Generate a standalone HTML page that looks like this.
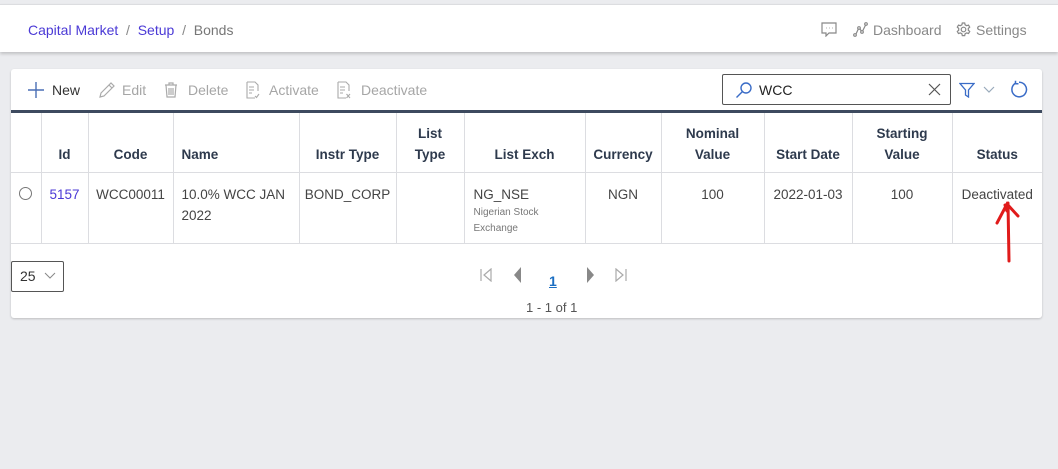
<!DOCTYPE html>
<html><head><meta charset="utf-8"><style>
*{box-sizing:border-box;margin:0;padding:0}
body{width:1058px;height:469px;background:#ebecef;font-family:"Liberation Sans",sans-serif;position:relative;overflow:hidden;color:#333}
.top{position:absolute;left:0;top:4px;width:1058px;height:48px;background:#fff;border-top:1px solid #dcdde0;box-shadow:0 2px 3px rgba(0,0,0,.18)}
.abs{position:absolute;white-space:nowrap}
.card{position:absolute;left:11px;top:69px;width:1031px;height:249px;background:#fff;border-radius:3px;box-shadow:0 1px 2px rgba(0,0,0,.2)}
.tb{font-size:14px;color:#a6a6a6}
table{position:absolute;left:0;top:41px;border-collapse:collapse;table-layout:fixed;border-top:3px solid #3d4a5f}
td,th{border:1px solid #dcdde1;font-size:13.5px}
th{height:61px;font-weight:bold;color:#2e3a4d;vertical-align:bottom;padding-bottom:7px;line-height:21px}
td{height:71px;vertical-align:top;padding-top:11px;line-height:21px;color:#444}
tr>*:first-child{border-left:none}
tr>*:last-child{border-right:none}
</style></head><body>
<div class="top">
<div class="abs" style="left:28px;top:17px;font-size:14px;color:#4b3ad6">Capital Market <span style="color:#888">&nbsp;/&nbsp;</span> Setup <span style="color:#888">&nbsp;/&nbsp;</span> <span style="color:#777">Bonds</span></div>
<svg class="abs" style="left:821px;top:17px" width="16" height="15" viewBox="0 0 16 15" fill="none" stroke="#888" stroke-width="1.2"><path d="M1 1h14v10H8l-3 3v-3H1z"/><path d="M5 6h.5M8 6h.5M11 6h.5"/></svg>
<svg class="abs" style="left:853px;top:17px" width="15" height="15" viewBox="0 0 15 15" fill="none" stroke="#888" stroke-width="1.2"><circle cx="2" cy="13" r="1.3"/><circle cx="6" cy="6" r="1.3"/><circle cx="9" cy="10" r="1.3"/><circle cx="13" cy="2" r="1.3"/><path d="M3 12l2.3-5M7 7l1.3 2M9.6 9l3-6"/></svg>
<div class="abs" style="left:873px;top:17px;font-size:14px;color:#888">Dashboard</div>
<svg class="abs" style="left:956px;top:17px" width="15" height="15" viewBox="0 0 15 15" fill="none" stroke="#888" stroke-width="1.2"><circle cx="7.5" cy="7.5" r="2.3"/><path d="M6.3 1h2.4l.4 1.8 1.6.9 1.8-.6 1.2 2-1.4 1.3v1.8l1.4 1.3-1.2 2-1.8-.6-1.6.9-.4 1.8H6.3l-.4-1.8-1.6-.9-1.8.6-1.2-2 1.4-1.3V6.4L1.3 5.1l1.2-2 1.8.6 1.6-.9z"/></svg>
<div class="abs" style="left:976px;top:17px;font-size:14px;color:#888">Settings</div>
</div>
<div class="card">
<svg class="abs" style="left:16px;top:12px" width="18" height="18" viewBox="0 0 18 18" stroke="#4a6fb5" stroke-width="1.4"><path d="M9 1v16M1 9h16"/></svg>
<div class="abs" style="left:41px;top:13px;font-size:14px;color:#333">New</div>
<svg class="abs" style="left:87px;top:12px" width="18" height="18" viewBox="0 0 18 18" fill="none" stroke="#aaa" stroke-width="1.2"><path d="M2 16l1-4L13 2l3 3L6 15z M11 4l3 3"/></svg>
<div class="abs tb" style="left:111px;top:13px">Edit</div>
<svg class="abs" style="left:152px;top:12px" width="16" height="18" viewBox="0 0 16 18" fill="none" stroke="#aaa" stroke-width="1.2"><path d="M2 4h12M6 4V2h4v2M3 4l1 12h8l1-12M6 7v7M8 7v7M10 7v7"/></svg>
<div class="abs tb" style="left:177px;top:13px">Delete</div>
<svg class="abs" style="left:234px;top:12px" width="16" height="18" viewBox="0 0 16 18" fill="none" stroke="#aaa" stroke-width="1.1"><path d="M2 1h8l3 3v6M2 1v16h8M4 6h5M4 9h5M4 12h3M10 15l1.5 1.5L14 13"/></svg>
<div class="abs tb" style="left:258px;top:13px">Activate</div>
<svg class="abs" style="left:325px;top:12px" width="16" height="18" viewBox="0 0 16 18" fill="none" stroke="#aaa" stroke-width="1.1"><path d="M2 1h8l3 3v6M2 1v16h8M4 6h5M4 9h5M4 12h3M10.5 13l3.5 4M14 13l-3.5 4"/></svg>
<div class="abs tb" style="left:350px;top:13px">Deactivate</div>
<div class="abs" style="left:711px;top:5px;width:229px;height:31px;border:1px solid #555;border-radius:2px"></div>
<svg class="abs" style="left:724px;top:12px" width="18" height="18" viewBox="0 0 18 18" fill="none" stroke="#3a6cc7" stroke-width="1.4"><circle cx="11" cy="7" r="5"/><path d="M7.5 10.5L1.5 16.5"/></svg>
<div class="abs" style="left:748px;top:13px;font-size:14px;color:#222">WCC</div>
<svg class="abs" style="left:917px;top:14px" width="13" height="13" viewBox="0 0 13 13" stroke="#555" stroke-width="1.2"><path d="M1 1l11 11M12 1L1 12"/></svg>
<svg class="abs" style="left:948px;top:13px" width="16" height="16" viewBox="0 0 16 16" fill="none" stroke="#3a6cc7" stroke-width="1.3"><path d="M1 1.5h14l-5.5 6.5v7l-3-2v-5z"/></svg>
<svg class="abs" style="left:972px;top:17px" width="12" height="8" viewBox="0 0 12 8" fill="none" stroke="#9ab" stroke-width="1.2"><path d="M1 1l5 5 5-5"/></svg>
<svg class="abs" style="left:999px;top:11px" width="18" height="19" viewBox="0 0 18 19" fill="none" stroke="#3a6cc7" stroke-width="1.5"><path d="M5.5 3.2A7.3 7.3 0 1 0 9 2.2"/><path d="M5.5 0.8v3h3"/></svg>
<table>
<colgroup><col style="width:30px"><col style="width:47px"><col style="width:85px"><col style="width:126px"><col style="width:97px"><col style="width:68px"><col style="width:121px"><col style="width:76px"><col style="width:103px"><col style="width:88px"><col style="width:100px"><col style="width:90px"></colgroup>
<tr><th></th><th>Id</th><th>Code</th><th style="text-align:left;padding-left:8px">Name</th><th>Instr Type</th><th>List<br>Type</th><th>List Exch</th><th>Currency</th><th>Nominal<br>Value</th><th>Start Date</th><th>Starting<br>Value</th><th>Status</th></tr>
<tr><td style="text-align:center"><span style="display:inline-block;width:13px;height:13px;border:1px solid #777;border-radius:50%;margin-top:3px"></span></td>
<td style="text-align:center;color:#4b3ad6">5157</td><td style="text-align:center">WCC00011</td><td style="padding-left:8px">10.0% WCC JAN<br>2022</td><td style="text-align:center">BOND_CORP</td><td></td>
<td style="padding-left:9px">NG_NSE<div style="font-size:10px;line-height:16px;color:#777">Nigerian Stock<br>Exchange</div></td>
<td style="text-align:center">NGN</td><td style="text-align:center">100</td><td style="text-align:center">2022-01-03</td><td style="text-align:center">100</td><td style="text-align:center">Deactivated</td></tr>
</table>
<svg class="abs" style="left:978px;top:130px" width="40" height="66" viewBox="0 0 40 66" fill="none" stroke="#e01b1b" stroke-width="3" stroke-linecap="round"><path d="M19 4L20 62M8 24L18 5 29 17M16 6l2 6"/></svg>
<div class="abs" style="left:0;top:192px;width:53px;height:31px;border:1px solid #555;border-radius:2px"></div>
<div class="abs" style="left:9px;top:199px;font-size:14px;color:#333">25</div>
<svg class="abs" style="left:33px;top:203px" width="12" height="8" viewBox="0 0 12 8" fill="none" stroke="#888" stroke-width="1"><path d="M1 1l5 5 5-5"/></svg>
<svg class="abs" style="left:468px;top:199px" width="14" height="14" viewBox="0 0 14 14" fill="none" stroke="#aaa" stroke-width="1.2"><path d="M2 1v12M12 1L5 7l7 6z"/></svg>
<svg class="abs" style="left:500px;top:198px" width="12" height="16" viewBox="0 0 12 16" fill="#888"><path d="M10 0L3 8l7 8z"/></svg>
<div class="abs" style="left:538px;top:204px;font-size:14px;color:#1b6ec2;text-decoration:underline;font-weight:bold">1</div>
<svg class="abs" style="left:574px;top:198px" width="12" height="16" viewBox="0 0 12 16" fill="#888"><path d="M2 0l7 8-7 8z"/></svg>
<svg class="abs" style="left:603px;top:199px" width="14" height="14" viewBox="0 0 14 14" fill="none" stroke="#aaa" stroke-width="1.2"><path d="M12 1v12M2 1l7 6-7 6z"/></svg>
<div class="abs" style="left:515px;top:231px;font-size:13px;color:#555">1 - 1 of 1</div>
</div>
</body></html>
